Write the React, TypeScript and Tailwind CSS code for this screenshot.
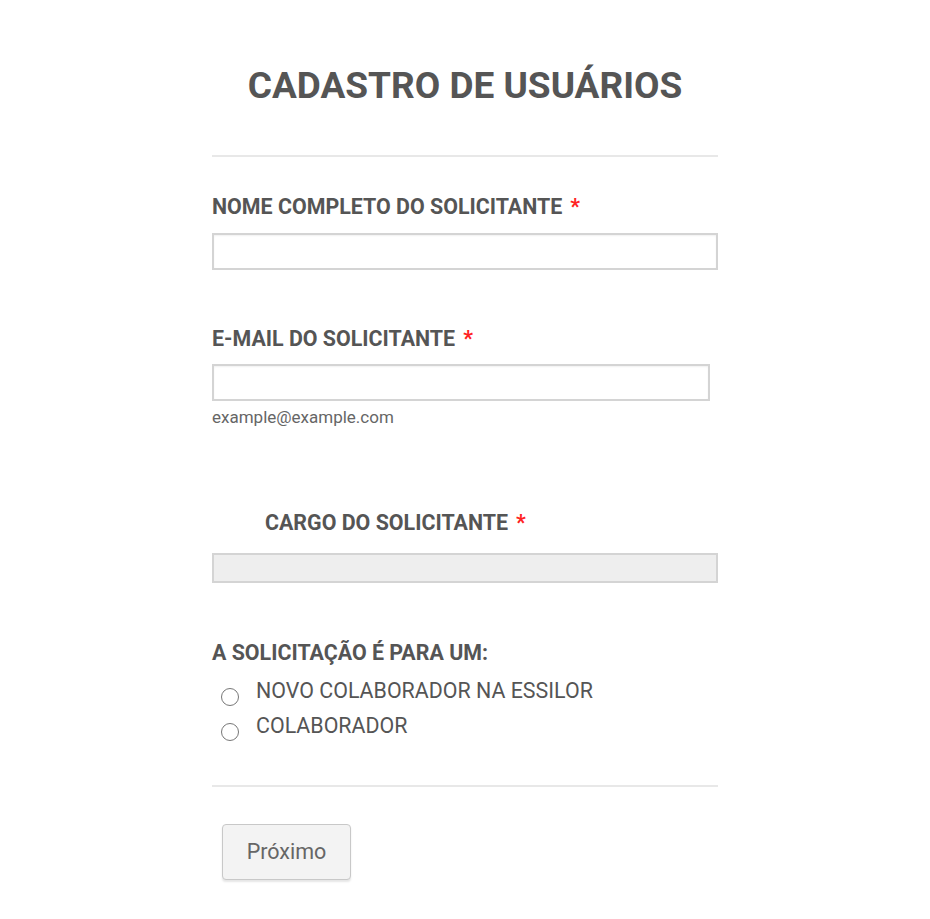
const Star = () => <span className="ml-2 text-[#ff2222]">*</span>;

const Radio = ({ label }: { label: string }) => (
  <label className="flex items-start h-[35px]">
    <span className="mt-[9px] ml-[9px] w-[18px] h-[18px] rounded-full border-[1.5px] border-[#777] bg-white" />
    <span className="ml-[17px] text-[21.4px] text-[#555] leading-[24px]">{label}</span>
  </label>
);

const App = () => {
  return (
    <div className="min-h-[919px] bg-white font-['Roboto',sans-serif] text-[#555]">
      <div className="w-[506px] ml-[212px] pt-[64px]">
        <h1 className="text-center text-[37px] font-bold leading-[44px]">
          CADASTRO DE USUÁRIOS
        </h1>
        <div className="h-[2px] bg-[#e8e8e8] mt-[47px]" />

        <div className="mt-[38px]">
          <div className="text-[21.4px] font-bold leading-[24px]">
            NOME COMPLETO DO SOLICITANTE
            <Star />
          </div>
          <div className="mt-[14px] h-[37px] border-2 border-[#d4d4d4] shadow-[inset_0_1px_2px_rgba(0,0,0,0.06)]" />
        </div>

        <div className="mt-[57px]">
          <div className="text-[21.4px] font-bold leading-[24px]">
            E-MAIL DO SOLICITANTE
            <Star />
          </div>
          <div className="mt-[13px] w-[498px] h-[37px] border-2 border-[#d4d4d4] shadow-[inset_0_1px_2px_rgba(0,0,0,0.06)]" />
          <div className="mt-[7px] text-[17px] text-[#666] leading-[18px]">example@example.com</div>
        </div>

        <div className="mt-[85px]">
          <div className="ml-[53px] text-[21.4px] font-bold leading-[24px]">
            CARGO DO SOLICITANTE
            <Star />
          </div>
          <div className="mt-[18px] h-[30px] border-2 border-[#d4d4d4] bg-[#eeeeee]" />
        </div>

        <div className="mt-[58px]">
          <div className="text-[21.4px] font-bold leading-[24px]">A SOLICITAÇÃO É PARA UM:</div>
          <div className="mt-[14px] flex flex-col">
            <Radio label="NOVO COLABORADOR NA ESSILOR" />
            <Radio label="COLABORADOR" />
          </div>
        </div>

        <div className="h-[2px] bg-[#e8e8e8] mt-[36px]" />

        <button className="mt-[37px] ml-[10px] w-[129px] h-[56px] rounded-[4px] border border-[#c8c8c8] bg-[#f3f3f3] text-[21.5px] text-[#666] shadow-[0_2px_2px_rgba(0,0,0,0.1)]">
          Próximo
        </button>
      </div>
    </div>
  );
};

export default App;
